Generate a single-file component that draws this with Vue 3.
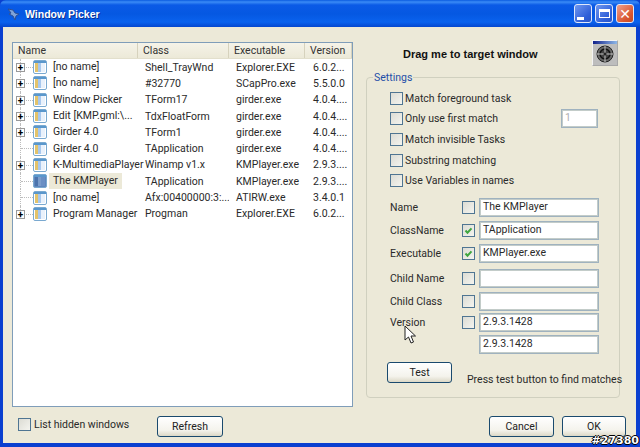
<template>
  <div class="window">
    <div class="titlebar">
      <svg class="app-icon" width="16" height="16" viewBox="0 0 16 16">
        <path d="M2 3l5 1 2 3 4 1-3 2-1 4-2-4-4-2 2-1z" fill="#7fa3d8" stroke="#2c4f96" stroke-width="1" />
      </svg>
      <span class="title">Window Picker</span>
      <div class="caption-buttons">
        <div class="cap-btn"><span class="min-glyph"></span></div>
        <div class="cap-btn"><span class="max-glyph"></span></div>
        <div class="cap-btn close"><span class="close-glyph">✕</span></div>
      </div>
    </div>

    <div class="client">
      <div class="main">
        <div class="list">
          <div class="list-header">
            <span class="col-head">Name</span>
            <span class="col-head">Class</span>
            <span class="col-head">Executable</span>
            <span class="col-head">Version</span>
          </div>
          <div class="tree">
            <div v-for="(row, index) in rows" :key="index" class="tree-row" :class="{ last: index === rows.length - 1 }">
              <div class="name-cell">
                <span class="branch"></span>
                <span v-if="row.plus" class="expander">+</span>
                <svg class="node-icon" width="14" height="14" viewBox="0 0 14 14">
                  <rect x="0.5" y="0.5" width="13" height="13" rx="1.5" :fill="row.selected ? '#5f86bd' : '#fff'" stroke="#7aa9d0" />
                  <rect x="1" y="1" width="12" height="2" fill="#5a97cc" />
                  <rect x="2" y="3" width="3" height="9" :fill="row.selected ? '#4b73ac' : '#e3c36a'" />
                  <rect x="5" y="3" width="3" height="9" :fill="row.selected ? '#7a9ccb' : '#a8c8ee'" />
                  <rect x="8" y="3" width="4" height="9" :fill="row.selected ? '#6a8fc4' : '#e9f1fb'" />
                </svg>
                <span class="name-text" :class="{ selected: row.selected }">{{ row.name }}</span>
              </div>
              <span class="cell class-cell">{{ row.cls }}</span>
              <span class="cell exe-cell">{{ row.exe }}</span>
              <span class="cell ver-cell">{{ row.ver }}</span>
            </div>
          </div>
        </div>

        <div class="side">
          <div class="drag-row">
            <span class="drag-text">Drag me to target window</span>
            <div class="drag-icon">
              <div class="drag-icon-bar"></div>
              <svg width="18" height="18" viewBox="0 0 18 18">
                <circle cx="9" cy="9" r="8" fill="#666" stroke="#222" />
                <circle cx="9" cy="9" r="5" fill="#444" stroke="#111" stroke-width="1.5" />
                <path d="M9 1v16M1 9h16" stroke="#c4c4c4" stroke-width="1" />
                <circle cx="9" cy="9" r="1.5" fill="#222" />
              </svg>
            </div>
          </div>

          <div class="group">
            <div class="group-title">Settings</div>

            <div class="options">
              <div v-for="opt in options" :key="opt" class="option">
                <span class="check"></span>
                <span class="option-label">{{ opt }}</span>
                <span v-if="opt === 'Only use first match'" class="input number-input">1</span>
              </div>
            </div>

            <div class="fields">
              <div v-for="field in fields" :key="field.label" class="field" :class="field.cls">
                <span class="field-label">{{ field.label }}</span>
                <span class="check" :class="{ hidden: field.noCheck }">
                  <svg v-if="field.checked" width="11" height="11" viewBox="0 0 11 11">
                    <path d="M2.5 5.5l2 2.2 4-4.4" fill="none" stroke="#3fa63f" stroke-width="2" />
                  </svg>
                </span>
                <span class="input">{{ field.value }}</span>
              </div>
            </div>

            <div class="test-row">
              <button class="btn test-btn">Test</button>
              <span class="test-hint">Press test button to find matches</span>
            </div>
          </div>
        </div>
      </div>

      <div class="footer">
        <span class="check"></span>
        <span class="hidden-label">List hidden windows</span>
        <button class="btn refresh-btn">Refresh</button>
        <button class="btn cancel-btn">Cancel</button>
        <button class="btn ok-btn">OK</button>
      </div>
    </div>

    <svg class="mouse" width="14" height="20" viewBox="0 0 14 20">
      <path d="M1 1v14l3.5-3 2.5 6 2.5-1-2.5-6h4.5z" fill="#fff" stroke="#222" stroke-width="1" />
    </svg>
    <span class="watermark">#27380</span>
  </div>
</template>

<script setup>
const rows = [
  { name: '[no name]', cls: 'Shell_TrayWnd', exe: 'Explorer.EXE', ver: '6.0.2...', plus: true },
  { name: '[no name]', cls: '#32770', exe: 'SCapPro.exe', ver: '5.5.0.0', plus: true },
  { name: 'Window Picker', cls: 'TForm17', exe: 'girder.exe', ver: '4.0.4....', plus: true },
  { name: 'Edit [KMP.gml:\\...', cls: 'TdxFloatForm', exe: 'girder.exe', ver: '4.0.4....', plus: true },
  { name: 'Girder 4.0', cls: 'TForm1', exe: 'girder.exe', ver: '4.0.4....', plus: true },
  { name: 'Girder 4.0', cls: 'TApplication', exe: 'girder.exe', ver: '4.0.4....' },
  { name: 'K-MultimediaPlayer', cls: 'Winamp v1.x', exe: 'KMPlayer.exe', ver: '2.9.3....', plus: true },
  { name: 'The KMPlayer', cls: 'TApplication', exe: 'KMPlayer.exe', ver: '2.9.3....', selected: true },
  { name: '[no name]', cls: 'Afx:00400000:3:...', exe: 'ATIRW.exe', ver: '3.4.0.1' },
  { name: 'Program Manager', cls: 'Progman', exe: 'Explorer.EXE', ver: '6.0.2...', plus: true }
]

const options = [
  'Match foreground task',
  'Only use first match',
  'Match invisible Tasks',
  'Substring matching',
  'Use Variables in names'
]

const fields = [
  { label: 'Name', value: 'The KMPlayer' },
  { label: 'ClassName', value: 'TApplication', checked: true },
  { label: 'Executable', value: 'KMPlayer.exe', checked: true },
  { label: 'Child Name', value: '', cls: 'spaced' },
  { label: 'Child Class', value: '', cls: 'child-class' },
  { label: 'Version', value: '2.9.3.1428', cls: 'version' },
  { label: '', value: '2.9.3.1428', noCheck: true, cls: 'tight' }
]
</script>

<style>
html, body {
  margin: 0;
  background: #0a3cc4;
}
</style>

<style scoped>
.window {
  position: relative;
  width: 640px;
  height: 447px;
  display: flex;
  flex-direction: column;
  overflow: hidden;
  background: #0a3fd0;
  font-family: Roboto, "Liberation Sans", Arial, sans-serif;
  font-size: 10.5px;
  color: #2a2a2a;
}

.titlebar {
  height: 27px;
  flex: none;
  display: flex;
  align-items: center;
  padding: 0 6px 0 6px;
  box-sizing: border-box;
  background: linear-gradient(#0a5be0 0, #3a8bf6 2px, #0a5ae6 5px, #0558e2 14px, #0a62ee 22px, #0547cf 27px);
  border-radius: 6px 6px 0 0;
}

.app-icon {
  margin-right: 3px;
}

.title {
  color: #fff;
  font-family: "Liberation Sans", Arial, sans-serif;
  font-weight: bold;
  font-size: 10.5px;
  text-shadow: 1px 1px 0 #0a2f90;
}

.caption-buttons {
  margin-left: auto;
  display: flex;
  gap: 3px;
}

.cap-btn {
  position: relative;
  width: 18px;
  height: 19px;
  box-sizing: border-box;
  border: 1px solid #dfe8fb;
  border-radius: 3px;
  background: linear-gradient(135deg, #6f97ef, #2f5fd8 70%, #2a55c6);
  display: flex;
  align-items: center;
  justify-content: center;
}

.cap-btn.close {
  background: linear-gradient(135deg, #f0a08a, #d8552f 70%, #c44a26);
}

.min-glyph {
  width: 7px;
  height: 3px;
  background: #fff;
  margin: 9px 5px 0 0;
}

.max-glyph {
  width: 11px;
  height: 9px;
  border: 1px solid #fff;
  border-top-width: 3px;
  box-sizing: border-box;
}

.close-glyph {
  color: #fff;
  font-family: "DejaVu Sans", sans-serif;
  font-size: 14px;
  font-weight: bold;
  line-height: 1;
}

.client {
  flex: 1;
  margin: 0 4px 4px 3px;
  padding: 15px 0 0 9px;
  background: #ece9d8;
  display: flex;
  flex-direction: column;
}

.main {
  display: flex;
  align-items: flex-start;
  gap: 13px;
}

.list {
  flex: none;
  width: 341px;
  height: 365px;
  box-sizing: border-box;
  border: 1px solid #7f9db9;
  background: #fff;
}

.list-header {
  height: 16px;
  display: grid;
  grid-template-columns: 125px 91px 76px 1fr;
  background: linear-gradient(#f5f3e8, #ece9d8);
  border-bottom: 1px solid #e2dfcc;
  box-sizing: border-box;
}

.col-head {
  padding-left: 5px;
  line-height: 15px;
  position: relative;
  border-right: 1px solid #d6d2bd;
  color: #333;
}

.tree {
  display: grid;
  grid-auto-rows: 16.3px;
}

.tree-row {
  display: grid;
  grid-template-columns: 125px 91px 76px 1fr;
  align-items: center;
}

.name-cell {
  position: relative;
  height: 100%;
  display: flex;
  align-items: center;
  padding-left: 20px;
}

.branch {
  position: absolute;
  left: 7px;
  top: 0;
  bottom: 0;
  width: 12px;
  border-left: 1px dotted #bcbcbc;
}

.branch::after {
  content: '';
  position: absolute;
  left: 0;
  top: 8px;
  width: 12px;
  border-top: 1px dotted #bcbcbc;
}

.tree-row.last .branch {
  bottom: 8px;
}

.expander {
  position: absolute;
  left: 3px;
  top: 4px;
  width: 9px;
  height: 9px;
  box-sizing: border-box;
  border: 1px solid #9a9a9a;
  background: #fff;
  color: #000;
  font-size: 10px;
  font-weight: bold;
  line-height: 7px;
  text-align: center;
}

.node-icon {
  flex: none;
  margin-right: 2px;
}

.name-text {
  padding: 0 4px;
  line-height: 16px;
  white-space: nowrap;
}

.name-text.selected {
  background: #ece9d8;
}

.cell {
  white-space: nowrap;
  overflow: hidden;
}

.class-cell {
  padding-left: 7px;
}

.exe-cell {
  padding-left: 7px;
}

.ver-cell {
  padding-left: 8px;
}

.side {
  flex: none;
  width: 254px;
}

.drag-row {
  height: 21px;
  padding-top: 0;
  position: relative;
  display: flex;
  align-items: center;
  margin-bottom: 14px;
}

.drag-text {
  margin: 3px 0 0 37px;
  font-family: "Liberation Sans", Arial, sans-serif;
  font-size: 11px;
  font-weight: bold;
  color: #111;
}

.drag-icon {
  margin: 1px 2px 0 auto;
  width: 26px;
  height: 26px;
  box-sizing: border-box;
  border: 1px solid #a8a8a8;
  border-top-color: #f4f4f4;
  border-left-color: #f4f4f4;
  background: #bdbdbd;
  display: flex;
  flex-direction: column;
  align-items: center;
}

.drag-icon-bar {
  width: 100%;
  height: 3px;
  flex: none;
  background: linear-gradient(90deg, #10208a, #8fb8e8);
  margin-bottom: 1px;
}

.group {
  height: 321px;
  box-sizing: border-box;
  border: 1px solid #d0d0bf;
  border-radius: 4px;
  padding: 0 0 0 23px;
}

.group-title {
  display: inline-block;
  margin: -7px 0 0 -17px;
  padding: 0 1px;
  background: #ece9d8;
  color: #1f4fa8;
  line-height: 13px;
  vertical-align: top;
}

.options {
  margin-top: -3px;
}

.option {
  height: 20.6px;
  display: flex;
  align-items: center;
}

.check {
  flex: none;
  width: 13px;
  height: 13px;
  box-sizing: border-box;
  border: 1px solid #4f7592;
  background: linear-gradient(135deg, #dcdcd4, #f4f4ef);
  display: flex;
  align-items: center;
  justify-content: center;
}

.check.hidden {
  visibility: hidden;
}

.option-label {
  margin-left: 2px;
}

.input {
  flex: none;
  width: 120px;
  height: 19px;
  box-sizing: border-box;
  border: 1px solid #9fb2bf;
  outline: 1px solid #c3ccc9;
  outline-offset: -2px;
  background: #fff;
  padding-left: 3px;
  line-height: 16px;
  white-space: nowrap;
}

.number-input {
  width: 37px;
  height: 19px;
  margin-left: auto;
  margin-right: 21px;
  color: #b0b0b0;
}

.fields {
  margin-top: 7px;
}

.field {
  height: 19px;
  display: flex;
  align-items: center;
  margin-bottom: 4px;
}

.field.spaced {
  margin-top: 6px;
}

.field.child-class {
  margin-top: 1px;
}

.field.version {
  margin-top: -2px;
}

.field.tight {
  margin-top: -1px;
}

.field-label {
  width: 72px;
  flex: none;
}

.field .check {
  margin-right: 4px;
}

.test-row {
  display: flex;
  margin-top: 8px;
  margin-left: -3px;
}

.btn {
  flex: none;
  font: inherit;
  color: #222;
  height: 21px;
  padding: 0;
  box-sizing: border-box;
  border: 1px solid #1a4a6e;
  border-radius: 3px;
  background: linear-gradient(#fff, #f4f3ec 70%, #dcd8c6);
}

.test-btn {
  width: 65px;
}

.test-hint {
  margin: 11px 0 0 15px;
  line-height: 13px;
  white-space: nowrap;
}

.footer {
  flex: 1;
  display: flex;
  align-items: flex-start;
  padding: 9px 0 0 6px;
}

.footer .check {
  margin-top: 2px;
}

.hidden-label {
  margin: 2px 0 0 3px;
  line-height: 13px;
  width: 123px;
  white-space: nowrap;
}

.refresh-btn {
  width: 66px;
}

.cancel-btn {
  width: 65px;
  margin-left: 266px;
}

.ok-btn {
  width: 64px;
  margin-left: 8px;
}

.mouse {
  position: absolute;
  left: 404px;
  top: 325px;
}

.watermark {
  position: absolute;
  right: 1px;
  bottom: 0;
  color: #fff;
  font-family: "DejaVu Sans", sans-serif;
  font-weight: bold;
  font-size: 11px;
  line-height: 13px;
  text-shadow: -1px 0 #000, 1px 0 #000, 0 -1px #000, 0 1px #000;
}
</style>
